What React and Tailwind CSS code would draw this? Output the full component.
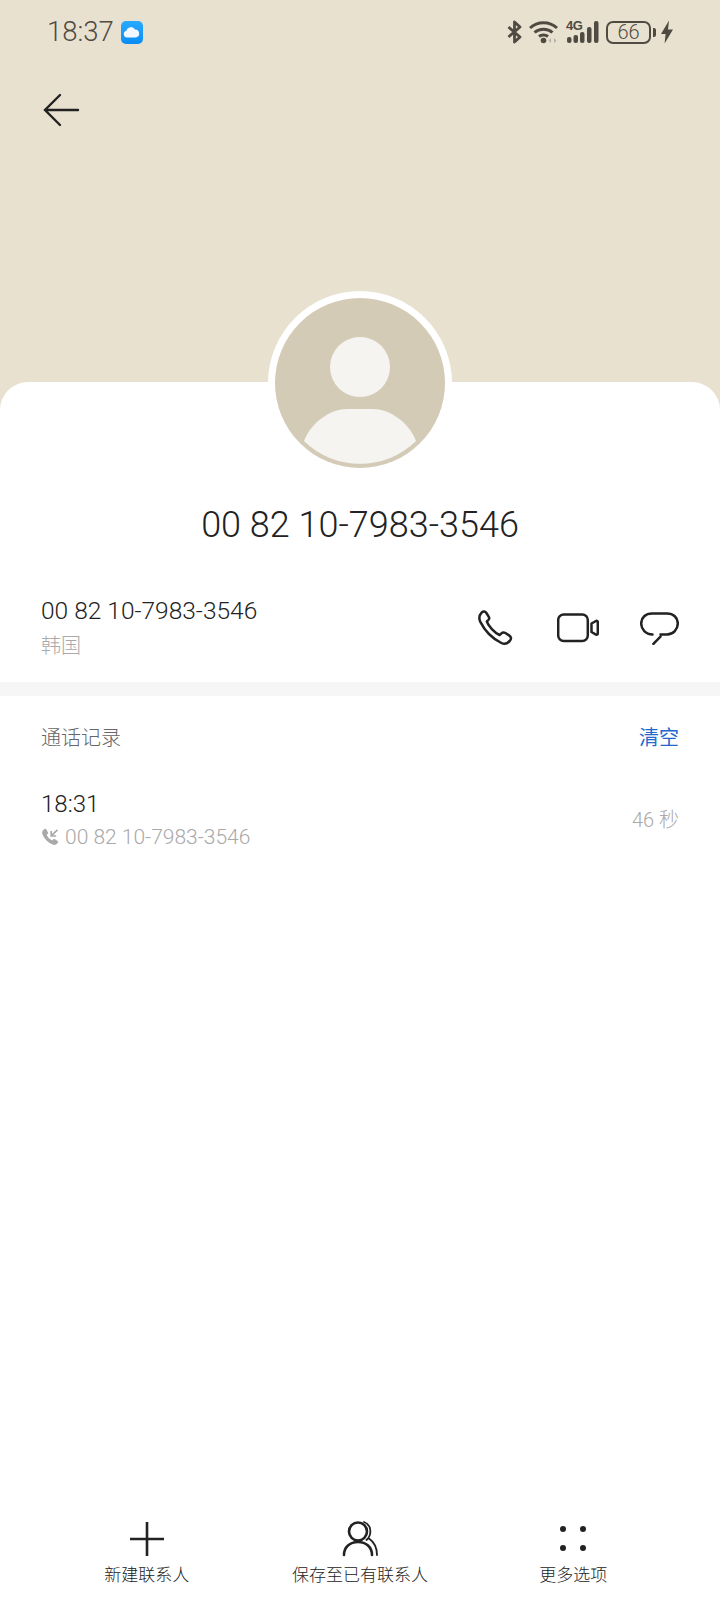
const FONT = "font-['Roboto','Noto_Sans_CJK_SC',sans-serif]";

function StatusIcons() {
  return (
    <div className="flex items-center text-[#4f4b43]">
      {/* bluetooth */}
      <svg width="15" height="24" viewBox="0 0 15 24" fill="none" stroke="currentColor" strokeWidth="2.800">
        <path d="M1.500 7 L13 17 L7.500 22 V2 L13 7 L1.500 17" strokeLinejoin="round" />
      </svg>
      {/* wifi with arrows */}
      <svg className="ml-[7px]" width="30" height="24" viewBox="0 0 30 24" fill="none" stroke="currentColor" strokeWidth="3">
        <path d="M1 8 C8.500 1 20.500 1 28 8" />
        <path d="M5.500 12.500 C10.500 8 18.500 8 23.500 12.500" />
        <path d="M10 16.500 C12.500 14.500 16.500 14.500 19 16.500" />
        <circle cx="14.500" cy="20.500" r="2.800" fill="currentColor" stroke="none" />
        <path d="M22 18 L19.500 20.500 L22 23 Z M25 18 L27.500 20.500 L25 23 Z" fill="#b5b0a3" stroke="none" />
      </svg>
      {/* 4G and signal bars */}
      <div className="relative ml-[7px] h-[24px] w-[33px]">
        <span className="absolute left-0 top-[-1px] text-[13px] leading-[14px] font-bold tracking-[-0.5px] font-['Liberation_Sans',sans-serif]">4G</span>
        <svg className="absolute inset-0" width="33" height="24" viewBox="0 0 33 24" fill="currentColor">
          <rect x="1" y="17" width="4.500" height="6" rx="2" />
          <rect x="7.500" y="15" width="4.500" height="8" rx="2" />
          <rect x="14" y="12" width="4.500" height="11" rx="2" />
          <rect x="21" y="7" width="4.500" height="16" rx="2" />
          <rect x="28" y="1" width="4.500" height="22" rx="2" />
        </svg>
      </div>
      {/* battery */}
      <div className="ml-[7px] flex h-[23px] w-[45px] items-center justify-center rounded-[7px] border-2 border-current text-[20px] leading-none font-light">
        66
      </div>
      <div className="ml-[2px] h-[9px] w-[3px] rounded-r-[2px] bg-current" />
      <svg className="ml-[5px]" width="12" height="24" viewBox="0 0 12 24" fill="currentColor">
        <path d="M8 0.500 L0 14 H4.600 L3.600 23.500 L12 9.500 H7 Z" />
      </svg>
    </div>
  );
}

function CloudBadge() {
  return (
    <div className="ml-[7px] flex h-[23px] w-[22px] items-center justify-center rounded-[5px] bg-gradient-to-b from-[#27aaff] to-[#0a8cf5]">
      <svg width="17" height="12" viewBox="0 0 17 12" fill="#f2f8ff">
        <path d="M4 11.500 A3.400 3.400 0 0 1 3.400 4.800 A4.600 4.600 0 0 1 12 3.600 A4 4 0 0 1 13 11.500 Z" />
      </svg>
    </div>
  );
}

function ActionIcons() {
  return (
    <div className="flex items-center text-[#222222]">
      <svg width="36" height="36" viewBox="0 0 36 36" fill="none" stroke="currentColor" strokeWidth="2.500" strokeLinejoin="round">
        <path d="M4.600 2.600 C6.400 0.800 8.400 1.400 9.400 3 L11.800 6.800 C12.600 8.200 12.200 9.400 11 10.400 L9.800 11.400 C11 15.600 17.200 22.400 22.600 25 L24.400 23.400 C25.600 22.200 27 22.200 28.400 23 L32.400 25.600 C34.200 26.800 34.600 28.800 33 30.600 C30.600 33.600 27.600 34.600 24.400 33 C15.600 28.600 7.600 20.400 3.200 11.600 C1.800 8.400 2.400 5 4.600 2.600 Z" />
      </svg>
      <svg className="ml-[44px]" width="42" height="30" viewBox="0 0 42 30" fill="none" stroke="currentColor" strokeWidth="2.500">
        <rect x="1.200" y="1.600" width="29.600" height="26.400" rx="5.500" />
        <path d="M34.500 10.500 L39 8 C40 7.600 40.800 8.200 40.800 9.200 V20.400 C40.800 21.400 40 22 39 21.600 L34.500 19 Z" strokeLinejoin="round" />
      </svg>
      <svg className="ml-[41px]" width="39" height="33" viewBox="0 0 39 33" fill="none" stroke="currentColor" strokeWidth="2.500" strokeLinecap="round">
        <path d="M12 1.400 H27 C33.400 1.400 37.800 5.600 37.800 11.400 C37.800 17.200 33.400 22.400 27 22.400 H20.500 M13.400 31.800 L20.500 24.600 M12.500 22.400 C5.600 22.400 1.200 17.200 1.200 11.400 C1.200 5.600 5.600 1.400 12 1.400" />
      </svg>
    </div>
  );
}

function IncomingCallIcon() {
  return (
    <svg width="18" height="18" viewBox="0 0 18 18" fill="#a9a9a9">
      <path d="M3.600 1 C4.400 0.600 5 0.800 5.400 1.600 L7 4.400 C7.400 5 7.200 5.600 6.600 6 L5.600 6.800 C6.600 9.200 9 11.600 11.200 12.600 L12.200 11.400 C12.600 10.800 13.400 10.800 14 11.200 L16.600 13 C17.200 13.400 17.200 14.200 16.800 14.800 C15.600 16.600 13.800 17.400 11.800 16.600 C7.400 14.800 3.200 10.600 1.400 6.200 C0.600 4.200 1.600 2 3.600 1 Z" />
      <path d="M10.200 3 V8 H15.200 M10.600 7.600 L16.400 1.800" fill="none" stroke="#a9a9a9" strokeWidth="1.700" />
    </svg>
  );
}

function ToolbarItem({ icon, label }) {
  return (
    <div className="flex flex-col items-center">
      <div className="flex h-[36px] items-center justify-center text-[#222222]">{icon}</div>
      <span className="mt-[6px] text-[17px] leading-[24px] font-light text-[#222222]">{label}</span>
    </div>
  );
}

export default function App() {
  return (
    <div className={`${FONT} flex min-h-[1600px] w-[720px] flex-col bg-white`}>
      {/* tinted header behind the contact card */}
      <header className="h-[410px] bg-[#e8e1d0]">
        <div className="flex h-[64px] items-center justify-between pl-[47px] pr-[47px]">
          <div className="flex items-center">
            <span className="text-[27.500px] leading-none font-light text-[#4f4b43]">18:37</span>
            <CloudBadge />
          </div>
          <StatusIcons />
        </div>
        <button className="ml-[38px] mt-[23px] block text-[#222222]">
          <svg width="46" height="46" viewBox="0 0 46 46" fill="none" stroke="currentColor" strokeWidth="2.400" strokeLinecap="round">
            <path d="M7 23 H40 M22 8 L7 23 L22 38" />
          </svg>
        </button>
      </header>

      <main className="relative -mt-[28px] flex flex-1 flex-col rounded-t-[28px] bg-white">
        {/* avatar sits over the card edge */}
        <div className="absolute left-[268px] top-[-91px] flex h-[184px] w-[184px] items-center justify-center rounded-full bg-white">
          <div className="h-[170px] w-[170px] overflow-hidden rounded-full bg-[#d3cbb6]">
            <svg width="170" height="170" viewBox="0 0 170 170" fill="#f5f4f1">
              <circle cx="85" cy="69" r="30" />
              <path d="M29 143 C36 124 56 111 72 111 H98 C114 111 134 124 141 143 A80 80 0 0 1 29 143 Z" />
            </svg>
          </div>
        </div>

        <h1 className="mt-[123px] text-center text-[36px] leading-[40px] font-light text-[#222222]">00 82 10-7983-3546</h1>

        <section className="mt-[51px] flex items-start justify-between pl-[41px] pr-[41px]">
          <div>
            <p className="text-[24.500px] leading-[30px] font-light text-[#222222]">00 82 10-7983-3546</p>
            <p className="mt-[7px] text-[20px] leading-[26px] font-light text-[#a9a9a9]">韩国</p>
          </div>
          <div className="pt-[14px]">
            <ActionIcons />
          </div>
        </section>

        <div className="mt-[23px] h-[14px] bg-[#f6f6f6]" />

        <section className="px-[41px]">
          <div className="mt-[29px] flex items-center justify-between">
            <span className="text-[20px] leading-[26px] font-light text-[#666666]">通话记录</span>
            <span className="text-[20px] leading-[26px] text-[#2468cc]">清空</span>
          </div>
          <div className="mt-[38px] flex items-center justify-between">
            <div>
              <p className="text-[24px] leading-[30px] font-light text-[#222222]">18:31</p>
              <div className="mt-[5px] flex items-center">
                <IncomingCallIcon />
                <span className="ml-[6px] text-[21px] leading-[26px] font-light text-[#a9a9a9]">00 82 10-7983-3546</span>
              </div>
            </div>
            <span className="text-[20px] leading-[26px] font-light text-[#a9a9a9]">46 秒</span>
          </div>
        </section>

        <nav className="mt-auto grid grid-cols-3 px-[40px] pb-[13px]">
          <ToolbarItem
            label="新建联系人"
            icon={
              <svg width="36" height="36" viewBox="0 0 36 36" fill="none" stroke="currentColor" strokeWidth="2.600">
                <path d="M18 1 V35 M1 18 H35" />
              </svg>
            }
          />
          <ToolbarItem
            label="保存至已有联系人"
            icon={
              <svg width="36" height="36" viewBox="0 0 36 36" fill="none" stroke="currentColor" strokeWidth="2.600" strokeLinecap="round">
                <circle cx="16" cy="10.500" r="9" />
                <path d="M2 34 C2 26 8 21 16 21 C24 21 30 26 30 34" />
                <path d="M22 1 C30 4 30 14 24.500 19 M27 17.500 C32 21 35 27 35 34" strokeWidth="1.800" />
              </svg>
            }
          />
          <ToolbarItem
            label="更多选项"
            icon={
              <svg width="36" height="36" viewBox="0 0 36 36" fill="currentColor">
                <circle cx="8" cy="8" r="3" />
                <circle cx="28" cy="8" r="3" />
                <circle cx="8" cy="27" r="3" />
                <circle cx="28" cy="27" r="3" />
              </svg>
            }
          />
        </nav>
      </main>
    </div>
  );
}
